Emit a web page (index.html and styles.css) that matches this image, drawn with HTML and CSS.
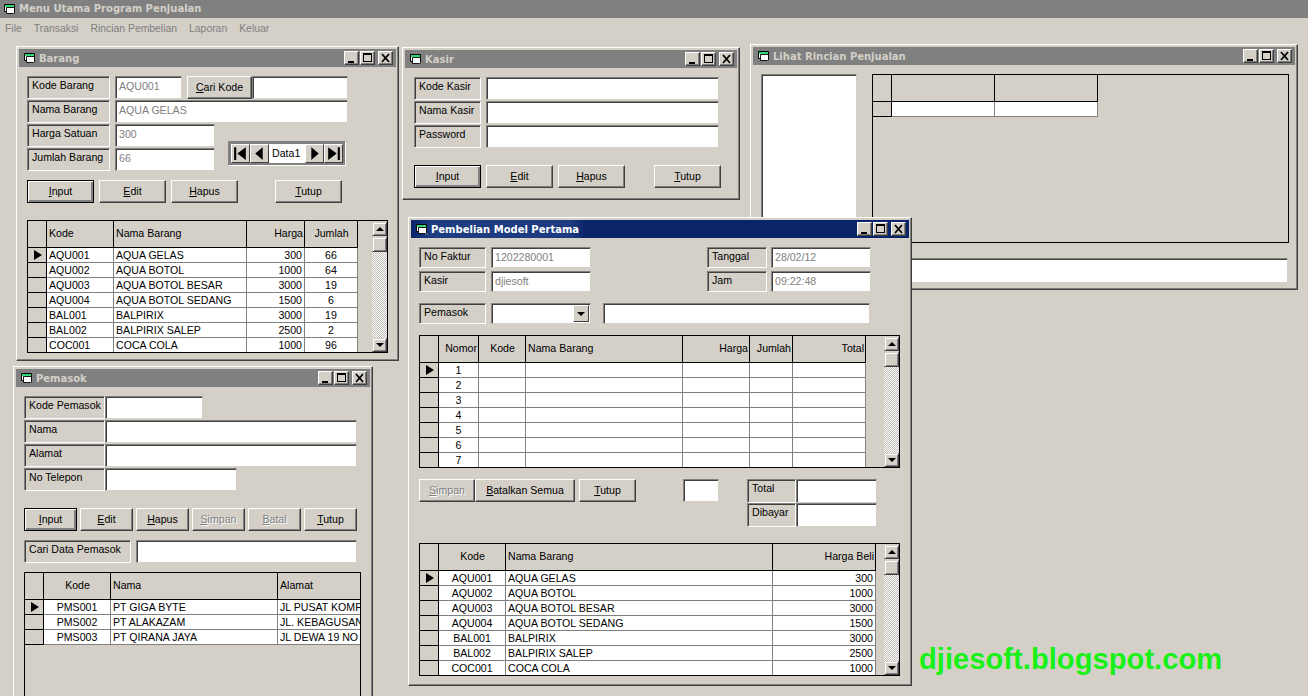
FILE: index.html
```html
<!DOCTYPE html>
<html lang="id">
<head>
<meta charset="utf-8">
<title>Menu Utama Program Penjualan</title>
<link rel="stylesheet" href="styles.css">
</head>
<body>
<svg class="defs" width="0" height="0" aria-hidden="true">
  <symbol id="ico" viewBox="0 0 13 12">
    <path d="M1.5 1.5h10v7h-10z" fill="#fff" stroke="#000"/>
    <path d="M2 2h9v2H2z" fill="#30d878"/>
    <path d="M3.5 4.5h8v6h-8z" fill="#fff" stroke="#000" stroke-width=".9"/>
    <path d="M10 10.5h3v1h-3z" fill="#808080"/>
  </symbol>
  <symbol id="min" viewBox="0 0 15 14"><path d="M4 10h6v2H4z" fill="#000"/></symbol>
  <symbol id="max" viewBox="0 0 15 14"><path d="M3 2h9v9H3zM4 4v6h7V4z" fill="#000" fill-rule="evenodd"/></symbol>
  <symbol id="cls" viewBox="0 0 15 14"><path d="M4 3l7 8M11 3l-7 8" stroke="#000" stroke-width="1.8" fill="none"/></symbol>
</svg>
<header class="appbar"><svg class="ico"><use href="#ico"/></svg><span>Menu Utama Program Penjualan</span></header>
<nav class="menu"><span>File</span><span>Transaksi</span><span>Rincian Pembelian</span><span>Laporan</span><span>Keluar</span></nav>
<main class="desktop">

<section class="win w-barang">
  <div class="cap"><svg class="ico"><use href="#ico"/></svg><span class="cap-t">Barang</span>
    <span class="cb"><svg><use href="#min"/></svg></span><span class="cb"><svg><use href="#max"/></svg></span><span class="cb cb-x"><svg><use href="#cls"/></svg></span></div>
  <div class="wb">
    <div class="stack">
      <div class="row"><div class="lbl w83">Kode Barang</div><div class="fld dis w67">AQU001</div>
        <div class="join"><button class="btn w65"><u>C</u>ari Kode</button><div class="fld w96"></div></div></div>
      <div class="row"><div class="lbl w83">Nama Barang</div><div class="fld dis w233">AQUA GELAS</div></div>
      <div class="split">
        <div class="stack">
          <div class="row"><div class="lbl w83">Harga Satuan</div><div class="fld dis w100">300</div></div>
          <div class="row"><div class="lbl w83">Jumlah Barang</div><div class="fld dis w100">66</div></div>
        </div>
        <div class="nav">
          <span class="nb"><svg viewBox="0 0 16 16"><path d="M2 2h2v12H2zM13 2v12L5 8z"/></svg></span>
          <span class="nb"><svg viewBox="0 0 16 16"><path d="M11 2v12L4 8z"/></svg></span>
          <span class="nt">Data1</span>
          <span class="nb"><svg viewBox="0 0 16 16"><path d="M5 2v12l7-6z"/></svg></span>
          <span class="nb"><svg viewBox="0 0 16 16"><path d="M3 2v12l8-6zM12 2h2v12h-2z"/></svg></span>
        </div>
      </div>
    </div>
    <div class="btns mt9">
      <button class="btn def w67"><u>I</u>nput</button><button class="btn w67"><u>E</u>dit</button><button class="btn w67"><u>H</u>apus</button><button class="btn w67 ml32"><u>T</u>utup</button>
    </div>
    <div class="grid mt17 g361">
      <div class="gm"><table>
        <tr><th class="c19"></th><th class="c67 l">Kode</th><th class="c133 l">Nama Barang</th><th class="c58 r">Harga</th><th class="c53">Jumlah</th></tr>
        <tr><td class="ind cur"></td><td>AQU001</td><td>AQUA GELAS</td><td class="r">300</td><td class="m">66</td></tr>
        <tr><td class="ind"></td><td>AQU002</td><td>AQUA BOTOL</td><td class="r">1000</td><td class="m">64</td></tr>
        <tr><td class="ind"></td><td>AQU003</td><td>AQUA BOTOL BESAR</td><td class="r">3000</td><td class="m">19</td></tr>
        <tr><td class="ind"></td><td>AQU004</td><td>AQUA BOTOL SEDANG</td><td class="r">1500</td><td class="m">6</td></tr>
        <tr><td class="ind"></td><td>BAL001</td><td>BALPIRIX</td><td class="r">3000</td><td class="m">19</td></tr>
        <tr><td class="ind"></td><td>BAL002</td><td>BALPIRIX SALEP</td><td class="r">2500</td><td class="m">2</td></tr>
        <tr><td class="ind"></td><td>COC001</td><td>COCA COLA</td><td class="r">1000</td><td class="m">96</td></tr>
      </table></div>
      <div class="sb"><span class="sbb up"></span><span class="thumb"></span><span class="track"></span><span class="sbb dn"></span></div>
    </div>
  </div>
</section>

<section class="win w-kasir">
  <div class="cap"><svg class="ico"><use href="#ico"/></svg><span class="cap-t">Kasir</span>
    <span class="cb"><svg><use href="#min"/></svg></span><span class="cb"><svg><use href="#max"/></svg></span><span class="cb cb-x"><svg><use href="#cls"/></svg></span></div>
  <div class="wb kb">
    <div class="stack">
      <div class="row"><div class="lbl w67">Kode Kasir</div><div class="fld w233"></div></div>
      <div class="row"><div class="lbl w67">Nama Kasir</div><div class="fld w233"></div></div>
      <div class="row"><div class="lbl w67">Password</div><div class="fld w233"></div></div>
    </div>
    <div class="btns mt17">
      <button class="btn def w67"><u>I</u>nput</button><button class="btn w67"><u>E</u>dit</button><button class="btn w67"><u>H</u>apus</button><button class="btn w67 ml24"><u>T</u>utup</button>
    </div>
  </div>
</section>

<section class="win w-rincian">
  <div class="cap"><svg class="ico"><use href="#ico"/></svg><span class="cap-t">Lihat Rincian Penjualan</span>
    <span class="cb"><svg><use href="#min"/></svg></span><span class="cb"><svg><use href="#max"/></svg></span><span class="cb cb-x"><svg><use href="#cls"/></svg></span></div>
  <div class="wb">
    <div class="rtop">
      <div class="fld listbox"></div>
      <div class="grid g417">
        <div class="gm"><table>
          <tr><th class="c19"></th><th class="c103"></th><th class="c103"></th></tr>
          <tr><td class="ind"></td><td></td><td></td></tr>
        </table></div>
      </div>
    </div>
    <div class="fld rfoot"></div>
  </div>
</section>

<section class="win w-pemasok">
  <div class="cap"><svg class="ico"><use href="#ico"/></svg><span class="cap-t">Pemasok</span>
    <span class="cb"><svg><use href="#min"/></svg></span><span class="cb"><svg><use href="#max"/></svg></span><span class="cb cb-x"><svg><use href="#cls"/></svg></span></div>
  <div class="wb">
    <div class="stack">
      <div class="join row-h"><div class="lbl w81">Kode Pemasok</div><div class="fld w98"></div></div>
      <div class="join row-h"><div class="lbl w81">Nama</div><div class="fld w252"></div></div>
      <div class="join row-h"><div class="lbl w81">Alamat</div><div class="fld w252"></div></div>
      <div class="join row-h"><div class="lbl w81">No Telepon</div><div class="fld w132"></div></div>
    </div>
    <div class="btns gap3 mt17">
      <button class="btn def w53"><u>I</u>nput</button><button class="btn w53"><u>E</u>dit</button><button class="btn w53"><u>H</u>apus</button><button class="btn off w53"><u>S</u>impan</button><button class="btn off w53"><u>B</u>atal</button><button class="btn w53"><u>T</u>utup</button>
    </div>
    <div class="row mt9"><div class="lbl w107">Cari Data Pemasok</div><div class="fld w221"></div></div>
    <div class="grid mt9 g337">
      <div class="gm"><table>
        <tr><th class="c19"></th><th class="c67">Kode</th><th class="c167 l">Nama</th><th class="c200 l">Alamat</th></tr>
        <tr><td class="ind cur"></td><td class="m">PMS001</td><td>PT GIGA BYTE</td><td>JL PUSAT KOMPUTER</td></tr>
        <tr><td class="ind"></td><td class="m">PMS002</td><td>PT ALAKAZAM</td><td>JL. KEBAGUSAN RAYA</td></tr>
        <tr><td class="ind"></td><td class="m">PMS003</td><td>PT QIRANA JAYA</td><td>JL DEWA 19 NO 5</td></tr>
      </table></div>
    </div>
  </div>
</section>

<section class="win w-beli">
  <div class="cap cap-on"><svg class="ico"><use href="#ico"/></svg><span class="cap-t">Pembelian Model Pertama</span>
    <span class="cb"><svg><use href="#min"/></svg></span><span class="cb"><svg><use href="#max"/></svg></span><span class="cb cb-x"><svg><use href="#cls"/></svg></span></div>
  <div class="wb">
    <div class="btop">
      <div class="stack g3">
        <div class="row rh21"><div class="lbl w67">No Faktur</div><div class="fld dis w100">1202280001</div></div>
        <div class="row rh21"><div class="lbl w67">Kasir</div><div class="fld dis w100">djiesoft</div></div>
      </div>
      <div class="stack g3">
        <div class="row rh21 gap4"><div class="lbl w60">Tanggal</div><div class="fld dis w100">28/02/12</div></div>
        <div class="row rh21 gap4"><div class="lbl w60">Jam</div><div class="fld dis w100">09:22:48</div></div>
      </div>
    </div>
    <div class="row rh21 mt11 gap12">
      <div class="join g5"><div class="lbl w67">Pemasok</div><div class="fld combo w100"><span class="drop"></span></div></div>
      <div class="fld w267"></div>
    </div>
    <div class="grid mt11 g481">
      <div class="gm"><table>
        <tr><th class="c19"></th><th class="c40 r">Nomor</th><th class="c47">Kode</th><th class="c157 l">Nama Barang</th><th class="c67 r">Harga</th><th class="c43 r">Jumlah</th><th class="c73 r">Total</th></tr>
        <tr><td class="ind cur"></td><td class="m">1</td><td></td><td></td><td></td><td></td><td></td></tr>
        <tr><td class="ind"></td><td class="m">2</td><td></td><td></td><td></td><td></td><td></td></tr>
        <tr><td class="ind"></td><td class="m">3</td><td></td><td></td><td></td><td></td><td></td></tr>
        <tr><td class="ind"></td><td class="m">4</td><td></td><td></td><td></td><td></td><td></td></tr>
        <tr><td class="ind"></td><td class="m">5</td><td></td><td></td><td></td><td></td><td></td></tr>
        <tr><td class="ind"></td><td class="m">6</td><td></td><td></td><td></td><td></td><td></td></tr>
        <tr><td class="ind"></td><td class="m">7</td><td></td><td></td><td></td><td></td><td></td></tr>
      </table></div>
      <div class="sb"><span class="sbb up"></span><span class="thumb"></span><span class="track"></span><span class="sbb dn"></span></div>
    </div>
    <div class="bmid">
      <div class="join"><button class="btn off w56"><u>S</u>impan</button><button class="btn w100"><u>B</u>atalkan Semua</button></div>
      <button class="btn w57 ml4"><u>T</u>utup</button>
      <div class="fld small"></div>
      <div class="totals">
        <div class="join rh24"><div class="lbl w49">Total</div><div class="fld w81"></div></div>
        <div class="join rh24"><div class="lbl w49">Dibayar</div><div class="fld w81"></div></div>
      </div>
    </div>
    <div class="grid mt16 g481">
      <div class="gm"><table>
        <tr><th class="c19"></th><th class="c67">Kode</th><th class="c267 l">Nama Barang</th><th class="c103 r">Harga Beli</th></tr>
        <tr><td class="ind cur"></td><td class="m">AQU001</td><td>AQUA GELAS</td><td class="r">300</td></tr>
        <tr><td class="ind"></td><td class="m">AQU002</td><td>AQUA BOTOL</td><td class="r">1000</td></tr>
        <tr><td class="ind"></td><td class="m">AQU003</td><td>AQUA BOTOL BESAR</td><td class="r">3000</td></tr>
        <tr><td class="ind"></td><td class="m">AQU004</td><td>AQUA BOTOL SEDANG</td><td class="r">1500</td></tr>
        <tr><td class="ind"></td><td class="m">BAL001</td><td>BALPIRIX</td><td class="r">3000</td></tr>
        <tr><td class="ind"></td><td class="m">BAL002</td><td>BALPIRIX SALEP</td><td class="r">2500</td></tr>
        <tr><td class="ind"></td><td class="m">COC001</td><td>COCA COLA</td><td class="r">1000</td></tr>
      </table></div>
      <div class="sb"><span class="sbb up"></span><span class="thumb"></span><span class="track"></span><span class="sbb dn"></span></div>
    </div>
  </div>
</section>

<div class="mark">djiesoft.blogspot.com</div>
</main>
</body>
</html>
```
FILE: styles.css
```css
* { box-sizing: border-box; }
html, body { margin: 0; height: 696px; overflow: hidden; }
body {
  display: flex; flex-direction: column;
  background: #d4d0c8; color: #000;
  font: 10.6px/14px "Liberation Sans", Arial, sans-serif;
}
.defs { position: absolute; }
.ico { width: 13px; height: 12px; flex: none; }
.appbar {
  height: 18px; flex: none; display: flex; align-items: center; gap: 3px; padding: 0 0 0 3px;
  background: #808080; color: #d4d0c8;
  font: bold 10px/18px "DejaVu Sans", Verdana, sans-serif;
}
.menu { height: 20px; flex: none; display: flex; gap: 12px; padding: 4px 0 0 5px; color: #808080; font-size: 10.4px; }
.desktop { position: relative; flex: 1; }

.win {
  position: absolute; display: flex; flex-direction: column; overflow: hidden;
  background: #d4d0c8; padding: 2px;
  border: 1px solid; border-color: #fff #404040 #404040 #fff;
  box-shadow: inset -1px -1px 0 #808080;
}
.w-barang  { left: 16px;  top: 8px;   width: 383px; height: 315px; }
.w-kasir   { left: 402px; top: 9px;   width: 338px; height: 153px; }
.w-rincian { left: 750px; top: 6px;   width: 548px; height: 246px; }
.w-pemasok { left: 13px;  top: 328px; width: 360px; height: 345px; }
.w-beli    { left: 408px; top: 179px; width: 504px; height: 469px; }

.cap {
  height: 18px; flex: none; display: flex; align-items: center; padding: 0 3px 0 4px;
  background: #808080; color: #d4d0c8;
  font: bold 10px/16px "DejaVu Sans", Verdana, sans-serif;
}
.cap-on {
  color: #fff;
  background: linear-gradient(90deg, #0a246a 0, #1d3b80 20px, #1d3b80 160px, #0a246a 174px);
}
.cap-t { margin-left: 3px; padding-top: 2px; flex: 1; white-space: nowrap; }
.cb {
  width: 15px; height: 14px; flex: none; display: block; background: #d4d0c8;
  border: 1px solid; border-color: #fff #404040 #404040 #fff;
  box-shadow: inset -1px -1px 0 #808080;
  margin-left: 1px; overflow: hidden;
}
.cb svg { display: block; width: 15px; height: 14px; margin: -1px 0 0 -1px; }
.cb-x { margin-left: 3px; }

.wb { padding: 9px 0 0 8px; }
.kb { padding-left: 9px; }
.stack { display: flex; flex-direction: column; gap: 1px; }
.g3 { gap: 3px; }
.row { display: flex; gap: 5px; height: 23px; }
.row-h { height: 23px; }
.rh21 { height: 21px; }
.rh24 { height: 24px; }
.join { display: flex; }
.split { display: flex; }

.lbl {
  height: 100%; padding: 1px 0 0 4px; white-space: nowrap; overflow: hidden; flex: none;
  border: 1px solid; border-color: #808080 #fff #fff #808080;
  box-shadow: inset 1px 1px 0 #404040;
}
.fld {
  height: 100%; padding: 2px 0 0 3px; background: #fff; white-space: nowrap; overflow: hidden; flex: none;
  border: 1px solid; border-color: #808080 #d4d0c8 #d4d0c8 #808080;
  box-shadow: inset 1px 1px 0 #404040;
}
.dis { color: #808080; }
.w49 { width: 49px; } .w53 { width: 53px; } .w56 { width: 56px; } .w57 { width: 57px; }
.w60 { width: 60px; } .w65 { width: 65px; } .w67 { width: 67px; } .w81 { width: 81px; }
.w83 { width: 83px; } .w96 { width: 96px; } .w98 { width: 98px; } .w100 { width: 100px; }
.w107 { width: 107px; } .w132 { width: 132px; } .w221 { width: 221px; } .w233 { width: 233px; }
.w252 { width: 252px; } .w267 { width: 267px; }

.btn {
  height: 23px; padding: 0 0 2px; background: #d4d0c8; color: #000; font: inherit; flex: none;
  border: 1px solid; border-color: #fff #404040 #404040 #fff;
  box-shadow: inset -1px -1px 0 #808080;
}
.def { border-color: #000; box-shadow: inset 1px 1px 0 #fff, inset -2px -2px 0 #808080; }
.off { color: #808080; text-shadow: 1px 1px 0 #fff; }
.btns { display: flex; gap: 5px; }
.gap3 { gap: 3px; }
.gap4 { gap: 4px; }
.gap12 { gap: 12px; }
.g5 { gap: 5px; }
.mt9 { margin-top: 9px; } .mt11 { margin-top: 11px; } .mt16 { margin-top: 16px; } .mt17 { margin-top: 17px; }
.ml4 { margin-left: 4px; } .ml24 { margin-left: 24px; } .ml32 { margin-left: 32px; }

.nav {
  width: 118px; height: 25px; margin: 17px 0 0 13px; display: flex; align-items: center; padding: 2px;
  background: #808080; border: 1px solid; border-color: #808080 #fff #fff #808080; flex: none;
}
.nb {
  width: 19px; height: 19px; flex: none; background: #d4d0c8;
  border: 1px solid; border-color: #fff #404040 #404040 #fff;
}
.nb svg { display: block; width: 17px; height: 17px; }
.nt { flex: 1; height: 19px; background: #fff; padding: 2px 0 0 3px; }

.grid { display: flex; flex: none; justify-content: space-between; height: 133px; overflow: hidden; background: #d4d0c8; border: 1px solid #000; }
.gm { flex: 1; overflow: hidden; min-width: 0; }
.g361 { width: 361px; } .g481 { width: 481px; } .g337 { width: 337px; height: 130px; } .g417 { width: 417px; height: 169px; }
table { table-layout: fixed; width: 1px; border-collapse: separate; border-spacing: 0; }
th {
  height: 27px; padding: 0 1px 2px 2px; font-weight: normal; background: #d4d0c8; text-align: center;
  border-right: 1px solid #000; border-bottom: 1px solid #000; white-space: nowrap; overflow: hidden;
}
td {
  height: 15px; padding: 0 2px 0 2px; background: #fff; white-space: nowrap; overflow: hidden; line-height: 14px;
  border-right: 1px solid #808080; border-bottom: 1px solid #808080;
}
th.l, td.l { text-align: left; }
th.r, td.r { text-align: right; }
td.m { text-align: center; }
.c19 { width: 19px; } .c40 { width: 40px; } .c43 { width: 43px; } .c47 { width: 47px; }
.c53 { width: 53px; } .c58 { width: 58px; } .c67 { width: 67px; } .c73 { width: 73px; }
.c103 { width: 103px; } .c133 { width: 133px; } .c157 { width: 157px; } .c167 { width: 167px; }
.c200 { width: 200px; } .c267 { width: 267px; }
td.ind { background: #d4d0c8; border-right-color: #000; border-bottom-color: #000; position: relative; }
td.cur::before {
  content: ""; position: absolute; left: 6px; top: 2px;
  border-left: 8px solid #000; border-top: 5px solid transparent; border-bottom: 5px solid transparent;
}

.sb { width: 15px; flex: none; display: flex; flex-direction: column; margin: 1px 0 0; }
.sbb, .thumb {
  display: block; flex: none; height: 14px; background: #d4d0c8; position: relative;
  border: 1px solid; border-color: #d4d0c8 #404040 #404040 #d4d0c8;
  box-shadow: inset 1px 1px 0 #fff, inset -1px -1px 0 #808080;
}
.thumb { height: 15px; margin-top: 1px; }
.track { flex: 1; background: repeating-conic-gradient(#fff 0 25%, #c0bdb6 0 50%) 0 0 / 2px 2px; }
.sbb::before {
  content: ""; position: absolute; left: 3px; top: 4px;
  border-left: 4px solid transparent; border-right: 4px solid transparent;
}
.up::before { border-bottom: 4px solid #000; }
.dn::before { border-top: 4px solid #000; }

.rtop { display: flex; gap: 15px; }
.listbox { width: 96px; height: 169px; }
.rfoot { width: 527px; height: 25px; margin-top: 15px; }

.btop { display: flex; gap: 116px; }
.combo { position: relative; }
.drop {
  position: absolute; right: 1px; top: 1px; width: 16px; height: 17px; background: #d4d0c8;
  border: 1px solid; border-color: #fff #404040 #404040 #fff;
}
.drop::before {
  content: ""; position: absolute; left: 3px; top: 6px;
  border-left: 4px solid transparent; border-right: 4px solid transparent; border-top: 4px solid #000;
}
.bmid { display: flex; margin-top: 11px; height: 48px; }
.small { width: 36px; height: 23px; margin-left: 47px; }
.totals { margin-left: 28px; }

.mark {
  position: absolute; left: 919px; top: 604px;
  font: bold 29.2px/34px "Liberation Sans", Arial, sans-serif; color: #18f018;
  white-space: nowrap;
}
```
